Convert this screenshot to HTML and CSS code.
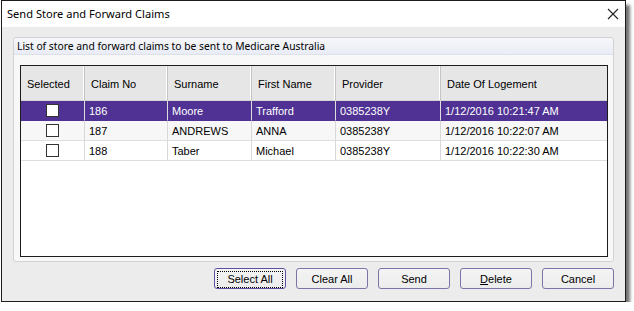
FILE: index.html
```html
<!DOCTYPE html>
<html>
<head>
<meta charset="UTF-8">
<title>Send Store and Forward Claims</title>
<link rel="stylesheet" href="styles.css">
</head>
<body>

    <div class="window">

        <div class="titlebar">
            <span class="title">Send Store and Forward Claims</span>
            <svg class="close" width="12" height="12" viewBox="0 0 12 12">
                <path d="M1 1 L11 11 M11 1 L1 11" stroke="#222" stroke-width="1.1" fill="none"/>
            </svg>
        </div>

        <div class="content">

            <div class="group">
                <div class="group-header">List of store and forward claims to be sent to Medicare Australia</div>
                <div class="group-body">
                    <div class="grid">
                        <table>
                            <thead>
                            <tr>
                                <th class="c-sel">Selected</th>
                                <th class="c-claim">Claim No</th>
                                <th class="c-sur">Surname</th>
                                <th class="c-first">First Name</th>
                                <th class="c-prov">Provider</th>
                                <th class="c-date">Date Of Logement</th>
                            </tr>
                            </thead>
                            <tbody>
                            <tr class="selected">
                                <td class="check"><span class="box"></span></td>
                                <td>186</td>
                                <td>Moore</td>
                                <td>Trafford</td>
                                <td>0385238Y</td>
                                <td>1/12/2016 10:21:47 AM</td>
                            </tr>
                            <tr class="alt">
                                <td class="check"><span class="box"></span></td>
                                <td>187</td>
                                <td>ANDREWS</td>
                                <td>ANNA</td>
                                <td>0385238Y</td>
                                <td>1/12/2016 10:22:07 AM</td>
                            </tr>
                            <tr>
                                <td class="check"><span class="box"></span></td>
                                <td>188</td>
                                <td>Taber</td>
                                <td>Michael</td>
                                <td>0385238Y</td>
                                <td>1/12/2016 10:22:30 AM</td>
                            </tr>
                            </tbody>
                        </table>
                    </div>
                </div>
            </div>

            <div class="buttons">
                <button class="btn default"><span class="focus">Select All</span></button>
                <button class="btn">Clear All</button>
                <button class="btn">Send</button>
                <button class="btn"><u>D</u>elete</button>
                <button class="btn">Cancel</button>
            </div>

        </div>

    </div>

</body>
</html>
```

FILE: styles.css
```css
body {
    margin: 0;
    background: #ffffff;
    font-family: "Liberation Sans", Arial, sans-serif;
}

.window {
    margin-left: 1px;
    width: 623px;
    height: 300px;
    border: 1px solid #1c1c1c;
    background: #ececec;
    box-shadow: 4px 5px 3px rgba(0, 0, 0, 0.55);
    display: flex;
    flex-direction: column;
}

.titlebar {
    height: 26px;
    background: #ffffff;
    display: flex;
    align-items: center;
    justify-content: space-between;
    padding: 0 6px 0 5px;
}
.title {
    font-family: "Noto Sans", sans-serif;
    font-size: 11.1px;
    color: #000;
    margin-top: -1px;
}
.close {
    margin-top: -1px;
}

.content {
    padding: 10px 11px 0 11px;
}

.group {
    height: 223px;
    border: 1px solid #d2d2d2;
    border-radius: 3px;
    background: #f8f8f8;
}
.group-header {
    height: 16px;
    line-height: 16px;
    padding-left: 3px;
    font-family: "Noto Sans", sans-serif;
    font-size: 10.3px;
    color: #000;
    background: linear-gradient(#f6f7fb, #e9ecf5);
    border-bottom: 1px solid #dde1ec;
    border-radius: 3px 3px 0 0;
}
.group-body {
    padding: 10px 6px 0 6px;
}

.grid {
    width: 586px;
    height: 190px;
    border: 1px solid #1c1c1c;
    background: #ffffff;
}

.grid table {
    table-layout: fixed;
    border-collapse: separate;
    border-spacing: 0;
    width: 586px;
    font-size: 11px;
}
.grid th, .grid td {
    box-sizing: border-box;
    text-align: left;
    font-weight: normal;
    white-space: nowrap;
    overflow: hidden;
    border-right: 1px solid #d8d8d8;
}
.grid th {
    height: 35px;
    padding: 1px 0 0 6px;
    background: #e6e6e6;
    border-right: 1px solid #c4c4c4;
    box-shadow: inset -1px 0 #ffffff;
    border-bottom: 1px solid #d4d4d4;
}
.grid td {
    height: 20px;
    padding: 0 0 0 4px;
    border-bottom: 1px solid #dedede;
    color: #000;
}
.grid th:last-child, .grid td:last-child {
    border-right: none;
    box-shadow: none;
}

.c-sel   { width: 64px; }
.c-claim { width: 83px; }
.c-sur   { width: 84px; }
.c-first { width: 84px; }
.c-prov  { width: 105px; }
.c-date  { width: 166px; }

.grid tr.alt td {
    background: #f7f7f7;
}
.grid tr.selected td {
    background: #4f3293;
    color: #ffffff;
    border-bottom-color: #4f3293;
    border-right-color: #dddddd;
}

.grid td.check {
    padding: 0;
    text-align: center;
}
.box {
    display: inline-block;
    width: 11px;
    height: 11px;
    border: 1px solid #333333;
    background: #ffffff;
    vertical-align: middle;
}

.buttons {
    display: flex;
    justify-content: flex-end;
    gap: 10px;
    margin-top: 6px;
}
.btn {
    width: 72px;
    height: 21px;
    padding: 0;
    font-family: "Liberation Sans", Arial, sans-serif;
    font-size: 11px;
    color: #000;
    background: linear-gradient(#f4f4f4, #ececec);
    border: 1px solid #7b74a6;
    border-radius: 3px;
}
.btn.default {
    border-color: #5a53a0;
    padding: 2px;
}
.btn .focus {
    display: block;
    height: 15px;
    line-height: 15px;
    border: 1px dotted #000;
}
```
